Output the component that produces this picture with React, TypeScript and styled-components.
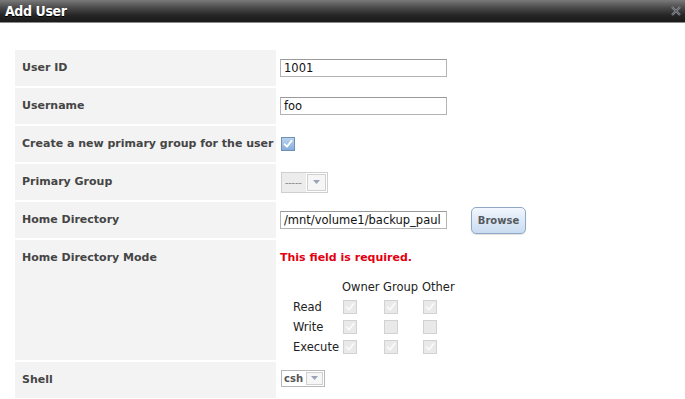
import styled, { createGlobalStyle } from 'styled-components';

const GlobalStyle = createGlobalStyle`
  html, body {
    margin: 0;
    padding: 0;
    background: #ffffff;
  }
  body {
    font-family: 'DejaVu Sans', Verdana, sans-serif;
  }
`;

interface CheckProps {
  checked?: boolean;
}

const CheckMark = ({ color }: { color: string }) => (
  <svg width="10" height="10" viewBox="0 0 10 10">
    <path d="M1.5 5.2 L4 7.6 L8.6 1.8" fill="none" stroke={color} strokeWidth="1.8" strokeLinecap="round" strokeLinejoin="round" />
  </svg>
);

const DisabledCheck = ({ checked }: CheckProps) => (
  <GreyBox>{checked && <CheckMark color="#fafafa" />}</GreyBox>
);

const Arrow = () => (
  <svg width="7" height="4" viewBox="0 0 7 4">
    <path d="M0 0 L7 0 L3.5 4 Z" fill="#9aa3b5" />
  </svg>
);

const perms = [
  { name: 'Read', values: [true, true, true] },
  { name: 'Write', values: [true, false, false] },
  { name: 'Execute', values: [true, true, true] },
];

const App = () => {
  return (
    <>
      <GlobalStyle />
      <Dialog>
        <TitleBar>
          <Title>Add User</Title>
          <CloseIcon>
            <svg width="10" height="10" viewBox="0 0 10 10">
              <path d="M1 1 L9 9 M9 1 L1 9" stroke="#8b9098" strokeWidth="2.4" />
              <path d="M1 1 L9 9 M9 1 L1 9" stroke="#5a5f66" strokeWidth="0.8" />
            </svg>
          </CloseIcon>
        </TitleBar>

        <Form>
          <Row>
            <Label>User ID</Label>
            <Value>
              <TextInput defaultValue="1001" />
            </Value>
          </Row>
          <Row>
            <Label>Username</Label>
            <Value>
              <TextInput defaultValue="foo" />
            </Value>
          </Row>
          <Row>
            <Label>Create a new primary group for the user</Label>
            <Value>
              <BlueCheck>
                <CheckMark color="#ffffff" />
              </BlueCheck>
            </Value>
          </Row>
          <Row>
            <Label>Primary Group</Label>
            <Value>
              <Select disabled>
                <SelectText disabled>-----</SelectText>
                <SelectButton>
                  <Arrow />
                </SelectButton>
              </Select>
            </Value>
          </Row>
          <Row>
            <Label>Home Directory</Label>
            <Value>
              <TextInput defaultValue="/mnt/volume1/backup_paul" />
              <BrowseButton>Browse</BrowseButton>
            </Value>
          </Row>
          <Row tall>
            <Label tall>Home Directory Mode</Label>
            <ModeCell>
              <ErrorText>This field is required.</ErrorText>
              <PermGrid>
                <span />
                <PermHead>Owner</PermHead>
                <PermHead>Group</PermHead>
                <PermHead>Other</PermHead>
                {perms.map(p => (
                  <PermRow key={p.name}>
                    <PermLabel>{p.name}</PermLabel>
                    {p.values.map((v, i) => (
                      <PermCell key={i}>
                        <DisabledCheck checked={v} />
                      </PermCell>
                    ))}
                  </PermRow>
                ))}
              </PermGrid>
            </ModeCell>
          </Row>
          <Row>
            <Label>Shell</Label>
            <Value>
              <Select small>
                <SelectText>csh</SelectText>
                <SelectButton small>
                  <Arrow />
                </SelectButton>
              </Select>
            </Value>
          </Row>
          <Row>
            <Label />
            <Value />
          </Row>
        </Form>
      </Dialog>
    </>
  );
};

export default App;

const Dialog = styled.div`
  width: 685px;
  height: 399px;
  overflow: hidden;
  background: #ffffff;
`;

const TitleBar = styled.div`
  height: 22px;
  display: flex;
  align-items: center;
  justify-content: space-between;
  padding: 0 4px 0 5px;
  background: linear-gradient(to bottom, #7a7a7a 0%, #4a4a4a 35%, #252525 70%, #1a1a1a 100%);
  border-bottom: 1px solid #8a8a8a;
`;

const Title = styled.div`
  font-family: 'DejaVu Sans Condensed', 'DejaVu Sans', sans-serif;
  font-weight: bold;
  font-size: 14px;
  color: #ffffff;
  letter-spacing: -0.4px;
  text-shadow: 0 1px 0 #000;
`;

const CloseIcon = styled.div`
  display: flex;
  align-items: center;
  opacity: 0.9;
`;

const Form = styled.div`
  display: flex;
  flex-direction: column;
  gap: 2px;
  padding: 27px 0 0 15px;
`;

const Row = styled.div<{ tall?: boolean }>`
  display: flex;
  gap: 2px;
  height: ${props => (props.tall ? '120px' : '36px')};
  align-items: ${props => (props.tall ? 'flex-start' : 'center')};
`;

const Label = styled.div<{ tall?: boolean }>`
  width: 254px;
  align-self: stretch;
  display: flex;
  align-items: ${props => (props.tall ? 'flex-start' : 'center')};
  padding: ${props => (props.tall ? '11px' : '0')} 0 0 7px;
  background: #f3f3f3;
  font-weight: bold;
  font-size: 11px;
  line-height: 14px;
  color: #454545;
`;

const Value = styled.div`
  display: flex;
  align-items: center;
  padding-left: 2px;
`;

const TextInput = styled.input`
  width: 167px;
  height: 18px;
  box-sizing: border-box;
  border: 1px solid #b4b4b4;
  border-top-color: #9a9a9a;
  padding: 0 3px;
  font-family: 'DejaVu Sans', Verdana, sans-serif;
  font-size: 11.5px;
  color: #111;
  background: #fff;
  outline: none;
`;

const BrowseButton = styled.button`
  margin-left: 24px;
  width: 55px;
  height: 27px;
  border: 1px solid #8fa8c6;
  border-radius: 5px;
  background: linear-gradient(to bottom, #f2f7fd 0%, #dde9f6 50%, #c9dcf0 100%);
  font-family: 'DejaVu Sans', Verdana, sans-serif;
  font-weight: bold;
  font-size: 10px;
  color: #555a60;
  padding: 0;
  box-shadow: 0 1px 1px rgba(0, 0, 0, 0.12);
`;

const BlueCheck = styled.div`
  width: 12px;
  height: 12px;
  margin-left: 1px;
  border: 1px solid #6f8fb3;
  background: linear-gradient(to bottom, #b9d3ee, #86aedb);
  display: flex;
  align-items: center;
  justify-content: center;
`;

const Select = styled.div<{ disabled?: boolean; small?: boolean }>`
  display: flex;
  height: ${props => (props.small ? '17px' : '21px')};
  border: 1px solid ${props => (props.disabled ? '#cfcfcf' : '#b8b8b8')};
  box-sizing: border-box;
  margin-left: 1px;
  margin-top: ${props => (props.small ? '-4px' : '0')};
  background: #fff;
`;

const SelectText = styled.div<{ disabled?: boolean }>`
  display: flex;
  align-items: center;
  padding: 0 ${props => (props.disabled ? '3px' : '2px')};
  width: ${props => (props.disabled ? '18px' : '19px')};
  background: ${props => (props.disabled ? '#ececec' : '#fff')};
  font-size: 10px;
  font-weight: ${props => (props.disabled ? 'normal' : 'bold')};
  color: ${props => (props.disabled ? '#8a8a8a' : '#555')};
  letter-spacing: ${props => (props.disabled ? '-0.3px' : '0')};
`;

const SelectButton = styled.div<{ small?: boolean }>`
  width: ${props => (props.small ? '17px' : '19px')};
  margin: 1px;
  border: 1px solid #d0d0d0;
  box-sizing: border-box;
  background: #f6f6f6;
  display: flex;
  align-items: center;
  justify-content: center;
`;

const ModeCell = styled.div`
  display: flex;
  flex-direction: column;
  padding: 11px 0 0 2px;
`;

const ErrorText = styled.div`
  font-weight: bold;
  font-size: 11px;
  line-height: 14px;
  color: #e4000f;
`;

const PermGrid = styled.div`
  margin-top: 12px;
  margin-left: 13px;
  display: grid;
  grid-template-columns: 49px 41px 39px 40px;
  grid-auto-rows: 20px;
  font-size: 11.5px;
  color: #222;
`;

const PermHead = styled.div`
  display: flex;
  align-items: center;
`;

const PermRow = styled.div`
  display: contents;
`;

const PermLabel = styled.div`
  display: flex;
  align-items: center;
`;

const PermCell = styled.div`
  display: flex;
  align-items: center;
  padding-left: 1px;
`;

const GreyBox = styled.div`
  width: 12px;
  height: 12px;
  border: 1px solid #d2d2d2;
  background: #e9e9e9;
  display: flex;
  align-items: center;
  justify-content: center;
`;
